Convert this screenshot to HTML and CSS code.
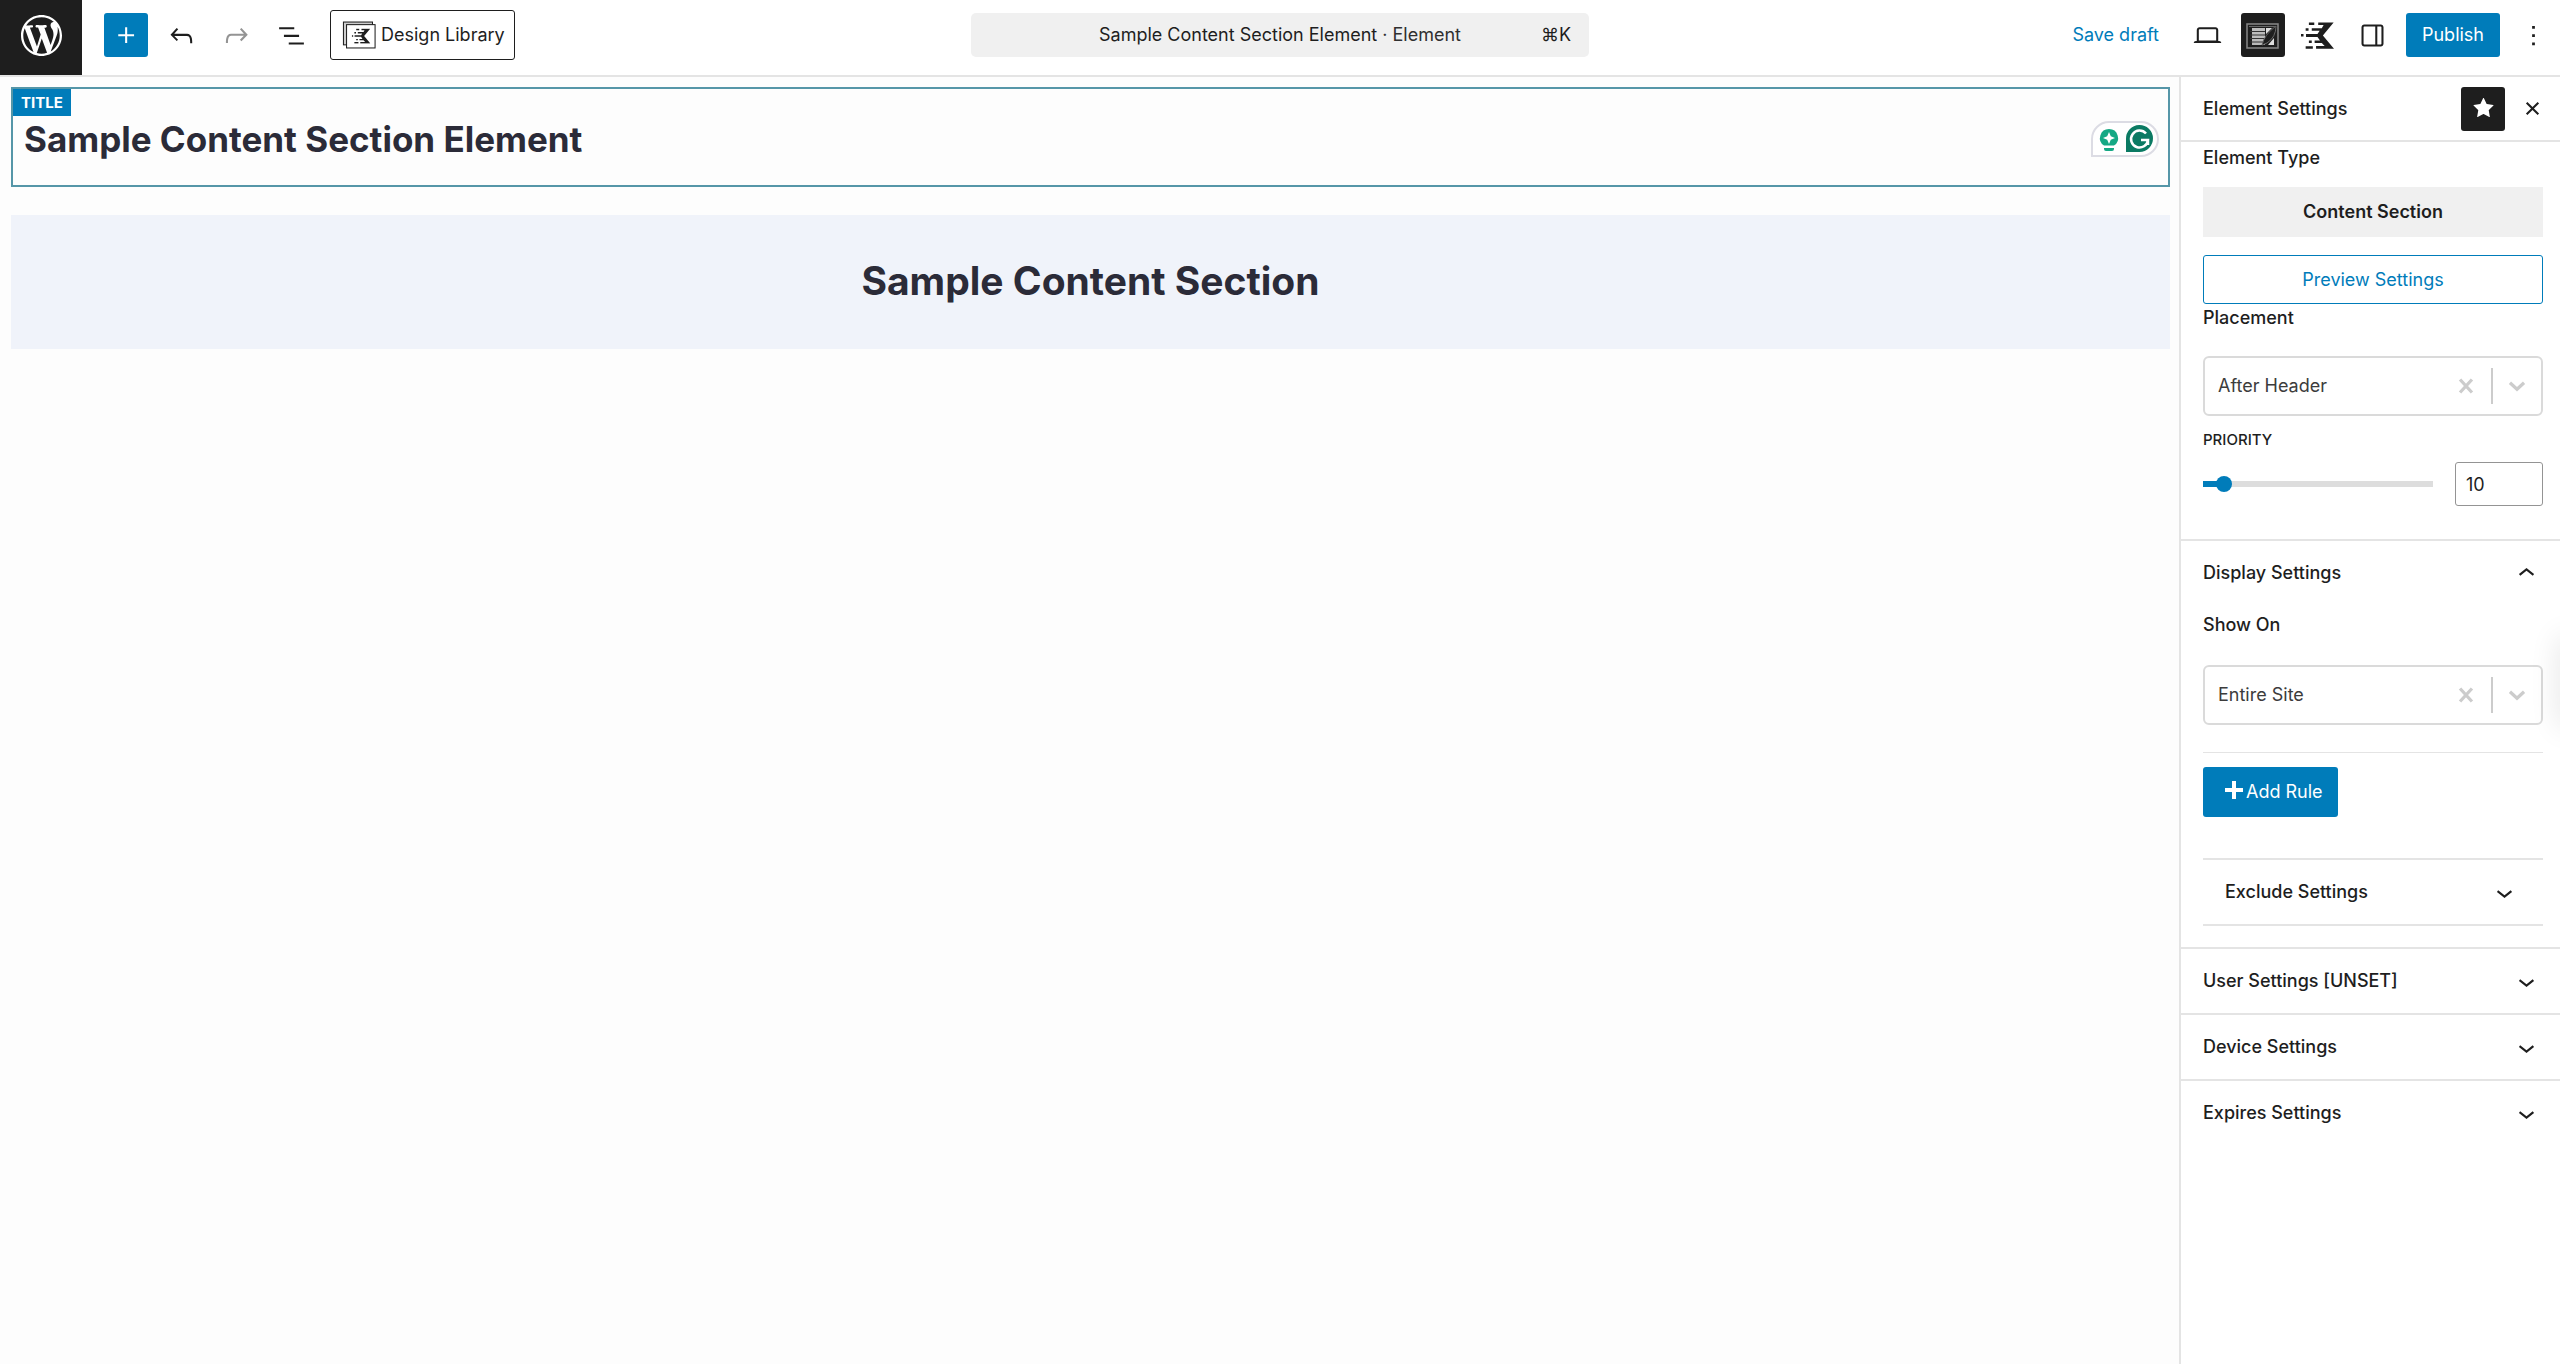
FILE: index.html
```html
<!DOCTYPE html>
<html lang="en">
<head>
<meta charset="utf-8">
<meta name="viewport" content="width=device-width, initial-scale=1">
<title>Sample Content Section Element</title>
<link rel="stylesheet" href="styles.css">
</head>
<body>
<svg class="sprite" aria-hidden="true">
  <symbol id="chevron-down" viewBox="0 0 24 24"><path d="M17.5 11.6L12 16l-5.5-4.4.9-1.2L12 14l4.500-3.600 1 1.200z"/></symbol>
  <symbol id="chevron-up" viewBox="0 0 24 24"><path d="M6.500 12.400L12 8l5.500 4.400-.9 1.200L12 10l-4.500 3.600-1-1.200z"/></symbol>
  <symbol id="kadence" viewBox="0 0 92 76">
    <path d="M48 2H91L61 38L92 75H42V67H66L58 59H38V52H53L46 42H14V34H46L52 25H30V18H58L63 9H48Z"/>
    <path d="M22 2h15v7H22zM13 18h8v7h-8zM0 34h7v7H0zM22 52h8v7h-8zM13 68h20v7H13z"/>
  </symbol>
  <symbol id="select-arrow" viewBox="0 0 24 24"><path d="M5.500 9l6.500 6 6.500-6" fill="none" stroke="currentColor" stroke-width="3"/></symbol>
  <symbol id="select-clear" viewBox="0 0 24 24"><path d="M6.500 6l11 12m0-12l-11 12" fill="none" stroke="currentColor" stroke-width="3"/></symbol>
</svg>

<header class="topbar">
  <div class="topbar-left">
    <a class="site-logo" href="#" aria-label="View elements">
      <svg viewBox="0 0 20 20"><path d="M20 10c0-5.510-4.490-10-10-10C4.480 0 0 4.490 0 10c0 5.520 4.480 10 10 10 5.510 0 10-4.480 10-10zM7.780 15.370L4.370 6.220c.55-.02 1.170-.08 1.170-.08.5-.06.44-1.130-.06-1.110 0 0-1.450.11-2.370.11-.18 0-.37 0-.58-.01C4.120 2.690 6.870 1.110 10 1.110c2.330 0 4.450.87 6.050 2.340-.68-.11-1.650.39-1.650 1.580 0 .74.45 1.360.9 2.100.35.61.55 1.360.55 2.460 0 1.490-1.400 5-1.400 5l-3.030-8.370c.54-.02.82-.17.82-.17.5-.05.44-1.250-.06-1.220 0 0-1.440.12-2.380.12-.87 0-2.330-.12-2.330-.12-.5-.03-.56 1.200-.06 1.220l.92.08 1.260 3.410zM17.410 10c.24-.64.74-1.870.43-4.250.7 1.290 1.050 2.710 1.050 4.250 0 3.290-1.730 6.240-4.400 7.780.97-2.590 1.940-5.200 2.920-7.780zM6.100 18.090C3.120 16.650 1.110 13.530 1.110 10c0-1.300.23-2.480.72-3.590C3.250 10.300 4.670 14.200 6.100 18.090zm4.030-6.630l2.580 6.980c-.86.29-1.760.45-2.710.45-.79 0-1.570-.11-2.290-.33.81-2.380 1.620-4.740 2.420-7.100z"/></svg>
    </a>
    <button class="icon-button primary" type="button" aria-label="Add block"><svg viewBox="0 0 24 24"><path d="M11 12.500V17.500H12.500V12.500H17.500V11H12.500V6H11V11H6V12.500H11Z"/></svg></button>
    <button class="icon-button" type="button" aria-label="Undo"><svg viewBox="0 0 24 24"><path d="M18.300 11.700c-.6-.6-1.400-.9-2.300-.9H6.700l2.900-3.300-1.100-1-4.500 5L8.500 16l1-1-2.700-2.700H16c.5 0 .9.2 1.300.5 1 1 1 3.400 1 4.500v.3h1.500v-.2c0-1.500 0-4.300-1.500-5.700z"/></svg></button>
    <button class="icon-button faded" type="button" aria-label="Redo"><svg viewBox="0 0 24 24"><path d="M15.600 6.500l-1.100 1 2.900 3.300H8c-.9 0-1.700.3-2.300.9-1.400 1.500-1.400 4.200-1.400 5.600v.2h1.500v-.3c0-1.100 0-3.500 1-4.500.3-.3.7-.5 1.300-.5h9.200L14.500 15l1.100 1.100 4.600-4.600-4.600-5z"/></svg></button>
    <button class="icon-button" type="button" aria-label="Document overview"><svg viewBox="0 0 24 24"><path d="M3 6h11v1.500H3V6Zm3.500 5.500h11V13h-11v-1.500ZM21 17H10v1.500h11V17Z"/></svg></button>
    <button class="library-button" type="button">
      <svg class="library-icon" viewBox="0 0 32 27" aria-hidden="true">
        <rect x="1" y="1" width="28" height="22" fill="#ccc" stroke="#1e1e1e"/>
        <rect x="4" y="3.500" width="27.500" height="22.500" fill="#fff" stroke="#1e1e1e"/>
        <use href="#kadence" x="9" y="7" width="18" height="15"/>
      </svg>
      Design Library
    </button>
  </div>
  <button class="command-bar" type="button">
    <span class="command-title">Sample Content Section Element <span class="command-type">· Element</span></span>
    <kbd>⌘K</kbd>
  </button>
  <div class="topbar-right">
    <button class="text-button" type="button">Save draft</button>
    <button class="icon-button" type="button" aria-label="View"><svg viewBox="0 0 24 24"><path d="M20.500 16h-.7V8c0-1.100-.9-2-2-2H6.200c-1.100 0-2 .9-2 2v8h-.7c-.8 0-1.500.7-1.500 1.500h20c0-.8-.7-1.500-1.500-1.500zM5.700 8c0-.3.2-.5.5-.5h11.600c.3 0 .5.2.5.5v7.600H5.700V8z"/></svg></button>
    <button class="icon-button pressed" type="button" aria-label="Element settings" aria-pressed="true">
      <svg viewBox="0 0 33 33">
        <rect x="1" y="5" width="31" height="24" fill="#1e1e1e" stroke="#888" stroke-width="1.500"/>
        <path d="M3 7.500h27" stroke="#666" stroke-width="1"/>
        <path d="M6 9h13v17H6z" fill="#bbb"/>
        <path d="M4 12.500h15M4 16h15M4 19.500h15M4 23h13" stroke="#333" stroke-width="1"/>
        <path d="M20 9h6l-6 6zM22 26l6-7v7z" fill="#ddd"/>
        <path d="M16 26Q18 16 30 7Q30 18 21 24Z" fill="#1e1e1e" stroke="#666" stroke-width="1"/>
      </svg>
    </button>
    <button class="icon-button" type="button" aria-label="Kadence blocks"><svg><use href="#kadence"/></svg></button>
    <button class="icon-button" type="button" aria-label="Settings"><svg viewBox="0 0 24 24"><path d="M18 4H6c-1.100 0-2 .9-2 2v12c0 1.100.9 2 2 2h12c1.100 0 2-.9 2-2V6c0-1.100-.9-2-2-2zm-4 14.500H6c-.3 0-.5-.2-.5-.5V6c0-.3.2-.5.5-.5h8v13zm4.500-.5c0 .3-.2.5-.5.5h-2.500v-13H18c.3 0 .5.2.5.5v12z"/></svg></button>
    <button class="publish-button primary" type="button">Publish</button>
    <button class="icon-button" type="button" aria-label="Options"><svg viewBox="0 0 24 24"><path d="M13 19h-2v-2h2v2zm0-6h-2v-2h2v2zm0-6h-2V5h2v2z"/></svg></button>
  </div>
</header>

<div class="workspace">
  <main class="canvas">
    <section class="title-block">
      <span class="title-tag">TITLE</span>
      <h1>Sample Content Section Element</h1>
      <div class="writing-helper">
        <svg viewBox="0 0 68 36" role="img" aria-label="Writing suggestions">
          <path d="M1 35V18A17 17 0 0 1 18 1H50A17 17 0 0 1 50 35Z" fill="#fff" stroke="#dcdce4" stroke-width="2"/>
          <path d="M18 8a9 9 0 0 1 5 16.500H13A9 9 0 0 1 18 8zM13 27h10v1a2 2 0 0 1-2 2h-6a2 2 0 0 1-2-2z" fill="#15a884"/>
          <path d="M18 11l1.800 4.200L24 17l-4.200 1.800L18 23l-1.800-4.200L12 17l4.200-1.800z" fill="#fff"/>
          <path d="M35 31V18A13.500 13.500 0 1 1 48.500 31Z" fill="#0b7a63"/>
          <path d="M55 12.500A8.500 8.500 0 1 0 57 19H50M53.500 19H57V24" fill="none" stroke="#fff" stroke-width="2.500"/>
        </svg>
      </div>
    </section>
    <section class="content-block">
      <h2>Sample Content Section</h2>
    </section>
  </main>

  <aside class="sidebar">
    <header class="sidebar-header">
      <h2>Element Settings</h2>
      <button class="icon-button pressed" type="button" aria-label="Pin to toolbar" aria-pressed="true"><svg viewBox="0 0 24 24"><path d="M11.776 4.454a.25.25 0 01.448 0l2.069 4.192a.25.25 0 00.188.137l4.626.672a.25.25 0 01.139.426l-3.348 3.263a.25.25 0 00-.072.222l.79 4.607a.25.25 0 01-.362.263l-4.138-2.175a.25.25 0 00-.232 0l-4.138 2.175a.25.25 0 01-.363-.263l.79-4.607a.25.25 0 00-.071-.222L4.754 9.881a.25.25 0 01.139-.426l4.626-.672a.25.25 0 00.188-.137l2.069-4.192z"/></svg></button>
      <button class="icon-button" type="button" aria-label="Close settings"><svg viewBox="0 0 24 24"><path d="M12 13.060l3.712 3.713 1.061-1.060L13.061 12l3.712-3.712-1.060-1.060L12 10.938 8.288 7.227l-1.061 1.060L10.939 12l-3.712 3.712 1.060 1.061L12 13.061z"/></svg></button>
    </header>

    <section class="panel panel-type">
      <h3>Element Type</h3>
      <p class="type-name">Content Section</p>
      <button class="outline-button" type="button">Preview Settings</button>
      <label class="field-label" for="placement">Placement</label>
      <div class="select-box">
        <select id="placement"><option>After Header</option></select>
        <button class="clear" type="button" aria-label="Clear placement"><svg><use href="#select-clear"/></svg></button>
        <span class="arrow"><svg aria-hidden="true"><use href="#select-arrow"/></svg></span>
      </div>
      <label class="caps-label" for="priority">PRIORITY</label>
      <div class="range-row">
        <input class="slider" id="priority" type="range" min="0" max="160" value="10">
        <input class="number" type="number" value="10" aria-label="Priority value">
      </div>
    </section>

    <section class="panel panel-display">
      <h3><button class="toggle" type="button" aria-expanded="true">Display Settings<svg aria-hidden="true"><use href="#chevron-up"/></svg></button></h3>
      <div class="panel-body">
        <label class="field-label" for="show-on">Show On</label>
        <div class="select-box">
          <select id="show-on"><option>Entire Site</option></select>
          <button class="clear" type="button" aria-label="Clear rule"><svg><use href="#select-clear"/></svg></button>
          <span class="arrow"><svg aria-hidden="true"><use href="#select-arrow"/></svg></span>
        </div>
        <div class="rule-actions">
          <button class="add-rule primary" type="button"><svg viewBox="0 0 18 18" aria-hidden="true"><path d="M7 0h4v7h7v4h-7v7H7v-7H0V7h7z"/></svg>Add Rule</button>
        </div>
        <h3 class="nested"><button class="toggle" type="button" aria-expanded="false">Exclude Settings<svg aria-hidden="true"><use href="#chevron-down"/></svg></button></h3>
      </div>
    </section>

    <section class="panel"><h3><button class="toggle" type="button" aria-expanded="false">User Settings [UNSET]<svg aria-hidden="true"><use href="#chevron-down"/></svg></button></h3></section>
    <section class="panel"><h3><button class="toggle" type="button" aria-expanded="false">Device Settings<svg aria-hidden="true"><use href="#chevron-down"/></svg></button></h3></section>
    <section class="panel"><h3><button class="toggle" type="button" aria-expanded="false">Expires Settings<svg aria-hidden="true"><use href="#chevron-down"/></svg></button></h3></section>
  </aside>
</div>
</body>
</html>
```
FILE: styles.css
```css
:root {
  --blue: #007cba;
  --ink: #1e1e1e;
  --line: #e4e4e4;
}

* { box-sizing: border-box; }

body {
  margin: 0;
  min-height: 100vh;
  display: flex;
  flex-direction: column;
  background: #fff;
  color: var(--ink);
  font: 400 18px/24px Inter, "Liberation Sans", sans-serif;
}

h1, h2, h3, p { margin: 0; }

h3, .sidebar-header h2, .field-label {
  font-size: 18px;
  line-height: 24px;
  font-weight: 500;
}

button, input, select {
  margin: 0;
  padding: 0;
  border: 0;
  background: none;
  color: inherit;
  font: inherit;
}

svg { display: block; fill: currentColor; }

.sprite { display: none; }

/* Top bar */
.topbar {
  display: grid;
  grid-template-columns: 1fr minmax(0, 618px) 1fr;
  border-bottom: 2px solid var(--line);
}

.topbar-left, .topbar-right {
  display: flex;
  align-items: center;
  gap: 11px;
}

.topbar-left > button { margin-bottom: 5px; }

.topbar-right {
  justify-content: flex-end;
  padding: 0 5px 5px 0;
}

.site-logo {
  display: grid;
  place-items: center;
  width: 82px;
  height: 75px;
  margin-right: 11px;
  padding-bottom: 5px;
  background: var(--ink);
  color: #fff;
}

.site-logo svg { width: 41px; height: 41px; }

.icon-button {
  display: grid;
  place-items: center;
  width: 44px;
  height: 44px;
  border-radius: 3px;
}

.icon-button svg { width: 33px; height: 33px; }

.primary { background: var(--blue); color: #fff; }
.pressed { background: var(--ink); color: #fff; }
.faded { color: #949494; }

.library-button {
  display: flex;
  align-items: center;
  gap: 5px;
  height: 50px;
  margin-left: 6px;
  padding: 0 9px 0 11px;
  border: 1px solid var(--ink);
  border-radius: 3px;
}

.library-icon { width: 34px; height: 28px; }

.command-bar {
  display: grid;
  grid-template-columns: 1fr auto 1fr;
  align-items: center;
  height: 44px;
  margin-top: 13px;
  padding: 0 18px;
  border-radius: 5px;
  background: #f0f0f0;
}

.command-title { grid-column: 2; }
.command-type { color: #2f2f2f; }

kbd {
  font: inherit;
  justify-self: end;
}

.text-button { padding: 0 16px; color: var(--blue); }

.publish-button {
  height: 44px;
  padding: 0 16px;
  border-radius: 3px;
}

/* Editor */
.workspace {
  flex: 1;
  display: grid;
  grid-template-columns: minmax(0, 1fr) 381px;
}

.canvas {
  padding: 10px 9px 10px 11px;
  background: #fdfdfd;
  color: #2b2b38;
}

.title-block {
  display: grid;
  grid-template-columns: 1fr auto;
  align-items: center;
  height: 100px;
  margin-bottom: 28px;
  border: 2px solid #5596a8;
  position: relative;
}

.title-tag {
  position: absolute;
  top: 0;
  left: 0;
  padding: 0 8px;
  background: var(--blue);
  color: #fff;
  font-size: 15px;
  line-height: 27px;
  font-weight: 700;
}

.title-block h1 {
  padding: 4px 0 0 11px;
  font-size: 35px;
  line-height: 44px;
  font-weight: 700;
}

.writing-helper { padding: 4px 9px 0 0; }
.writing-helper svg { width: 68px; height: 36px; }

.content-block {
  padding: 43px 44px 45px;
  background: #f0f3fa;
  text-align: center;
}

.content-block h2 {
  font-size: 39px;
  line-height: 46px;
  font-weight: 700;
}

/* Settings sidebar */
.sidebar {
  border-left: 2px solid var(--line);
  overflow: hidden;
  position: relative;
}

/* Soft shadow of the drawer tucked behind the window edge */
.sidebar::after {
  content: "";
  position: absolute;
  top: 560px;
  left: 100%;
  width: 20px;
  height: 90px;
  box-shadow: 0 0 30px rgba(0, 0, 0, 0.12);
}

.sidebar-header {
  display: flex;
  align-items: center;
  gap: 5px;
  height: 65px;
  padding: 0 6px 0 22px;
  border-bottom: 2px solid var(--line);
}

.sidebar-header h2 { flex: 1; }

.panel { border-bottom: 2px solid var(--line); }
.panel:last-child { border-bottom: 0; }

.panel-type {
  display: flex;
  flex-direction: column;
  padding: 4px 17px 33px 22px;
}

.type-name {
  margin: 17px 0 18px;
  background: #f0f0f0;
  font-weight: 600;
  line-height: 50px;
  text-align: center;
}

.outline-button {
  height: 49px;
  border: 1px solid var(--blue);
  border-radius: 3px;
  color: var(--blue);
}

.field-label { display: block; margin-bottom: 26px; }
.outline-button + .field-label { margin-top: 2px; }

.select-box {
  display: flex;
  align-items: center;
  height: 60px;
  border: 2px solid #dadada;
  border-radius: 6px;
  color: #ccc;
}

.select-box select {
  flex: 1;
  min-width: 0;
  height: 100%;
  padding-left: 13px;
  color: #3c3c3c;
  appearance: none;
}

.clear { padding: 0 12px; }
.select-box svg { width: 26px; height: 26px; }

.arrow {
  padding: 5px 11px;
  border-left: 2px solid #ccc;
}

.caps-label {
  margin: 12px 0 10px;
  font-size: 15px;
  font-weight: 500;
}

.range-row {
  display: flex;
  align-items: center;
  gap: 22px;
}

.slider {
  flex: 1;
  min-width: 0;
  height: 16px;
  border-radius: 3px;
  background: linear-gradient(90deg, var(--blue) 9%, #ddd 9%) center / 100% 6px no-repeat;
  appearance: none;
}

.slider::-webkit-slider-thumb {
  width: 16px;
  height: 16px;
  border-radius: 50%;
  background: var(--blue);
  appearance: none;
}

.number {
  width: 88px;
  height: 44px;
  padding: 0 10px;
  border: 1px solid #949494;
  border-radius: 3px;
  appearance: textfield;
}

.number::-webkit-inner-spin-button { display: none; }

.toggle {
  display: flex;
  align-items: center;
  justify-content: space-between;
  width: 100%;
  height: 64px;
  padding: 0 17px 0 22px;
  text-align: left;
}

.toggle svg { width: 33px; height: 33px; }

.panel-body { padding: 8px 17px 21px 22px; }

.panel-body .select-box { margin-bottom: 27px; }

.panel-body .field-label { margin-bottom: 28px; }

.rule-actions {
  padding: 14px 0 41px;
  border-top: 1px solid var(--line);
}

.add-rule {
  display: flex;
  align-items: center;
  gap: 3px;
  height: 50px;
  padding: 0 15px 0 22px;
  border-radius: 3px;
}

.add-rule svg { width: 18px; height: 18px; margin-bottom: 4px; }

.nested {
  border-top: 2px solid var(--line);
  border-bottom: 2px solid var(--line);
}

.nested .toggle { padding-right: 22px; }
```
